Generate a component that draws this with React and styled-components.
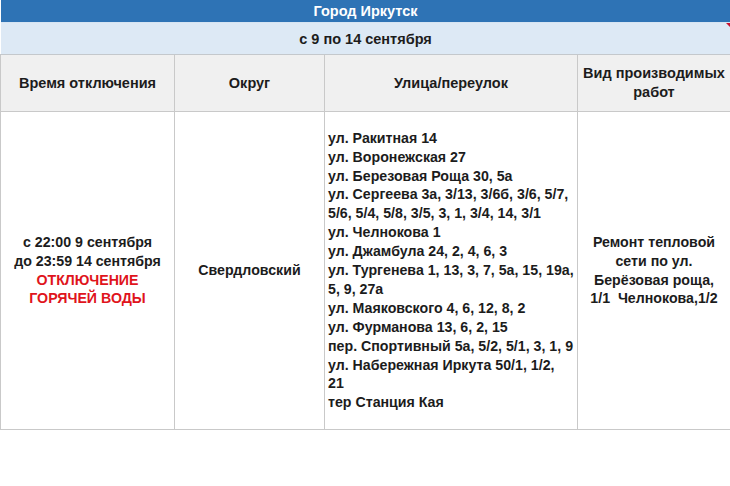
import React from 'react';
import styled, { createGlobalStyle } from 'styled-components';

const GlobalStyle = createGlobalStyle`
  html, body {
    margin: 0;
    padding: 0;
    background: #ffffff;
  }
  body {
    font-family: "Liberation Sans", Arial, sans-serif;
    color: #1c1c1c;
  }
`;

const Wrapper = styled.div`
  width: 730px;
  height: 486px;
  background: #fff;
`;

const Table = styled.table`
  width: 730px;
  border-collapse: collapse;
  table-layout: fixed;
  font-weight: bold;
`;

const TitleCell = styled.td`
  height: 22px;
  padding: 0;
  background: #2e73b5;
  color: #ffffff;
  font-size: 14.5px;
  text-align: center;
  vertical-align: middle;
  border-bottom: 1px solid #d6e4f2;
`;

const PeriodCell = styled.td`
  position: relative;
  height: 31px;
  padding: 0;
  background: #dde9f5;
  color: #1c1c1c;
  font-size: 14.5px;
  text-align: center;
  vertical-align: middle;
  border-bottom: 1px solid #c4c8cc;

  &::after {
    content: '';
    position: absolute;
    top: 0;
    right: 0;
    border-top: 5px solid #c8102e;
    border-left: 5px solid transparent;
  }
`;

const HeadCell = styled.th`
  height: 56px;
  padding: 0 3px;
  background: #f0f0f0;
  font-size: 14.5px;
  font-weight: bold;
  line-height: 19px;
  text-align: center;
  vertical-align: middle;
  border: 1px solid #c9c9c9;
  border-top: none;
`;

const BodyCell = styled.td`
  height: 317px;
  padding: 0 3px;
  font-size: 14.2px;
  line-height: 18.9px;
  text-align: ${p => (p.$left ? 'left' : 'center')};
  vertical-align: middle;
  border: 1px solid #c9c9c9;
`;

const Line = styled.div`
  white-space: nowrap;
`;

const Alert = styled.div`
  color: #e0141c;
`;

const streets = [
  'ул. Ракитная 14',
  'ул. Воронежская 27',
  'ул. Березовая Роща 30, 5а',
  'ул. Сергеева 3а, 3/13, 3/6б, 3/6, 5/7,',
  '5/6, 5/4, 5/8, 3/5, 3, 1, 3/4, 14, 3/1',
  'ул. Челнокова 1',
  'ул. Джамбула 24, 2, 4, 6, 3',
  'ул. Тургенева 1, 13, 3, 7, 5а, 15, 19а,',
  '5, 9, 27а',
  'ул. Маяковского 4, 6, 12, 8, 2',
  'ул. Фурманова 13, 6, 2, 15',
  'пер. Спортивный 5а, 5/2, 5/1, 3, 1, 9',
  'ул. Набережная Иркута 50/1, 1/2,',
  '21',
  'тер Станция Кая',
];

export default function App() {
  return (
    <Wrapper>
      <GlobalStyle />
      <Table>
        <colgroup>
          <col style={{ width: 174 }} />
          <col style={{ width: 150 }} />
          <col style={{ width: 253 }} />
          <col style={{ width: 153 }} />
        </colgroup>
        <tbody>
          <tr>
            <TitleCell colSpan={4}>Город Иркутск</TitleCell>
          </tr>
          <tr>
            <PeriodCell colSpan={4}>с 9 по 14 сентября</PeriodCell>
          </tr>
          <tr>
            <HeadCell>Время отключения</HeadCell>
            <HeadCell>Округ</HeadCell>
            <HeadCell>Улица/переулок</HeadCell>
            <HeadCell>Вид производимых работ</HeadCell>
          </tr>
          <tr>
            <BodyCell>
              <Line>с 22:00 9 сентября</Line>
              <Line>до 23:59 14 сентября</Line>
              <Alert>ОТКЛЮЧЕНИЕ</Alert>
              <Alert>ГОРЯЧЕЙ ВОДЫ</Alert>
            </BodyCell>
            <BodyCell>Свердловский</BodyCell>
            <BodyCell $left>
              {streets.map((s, i) => (
                <Line key={i}>{s}</Line>
              ))}
            </BodyCell>
            <BodyCell>
              <Line>Ремонт тепловой</Line>
              <Line>сети по ул.</Line>
              <Line>Берёзовая роща,</Line>
              <Line>1/1&nbsp; Челнокова,1/2</Line>
            </BodyCell>
          </tr>
        </tbody>
      </Table>
    </Wrapper>
  );
}
